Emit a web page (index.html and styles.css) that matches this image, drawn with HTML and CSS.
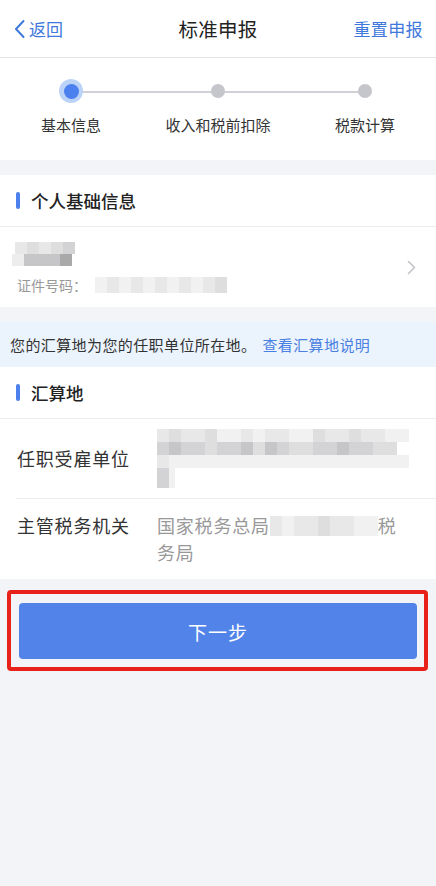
FILE: index.html
```html
<!DOCTYPE html>
<html lang="zh-CN">
<head>
    <meta charset="UTF-8">
    <meta name="viewport" content="width=device-width, initial-scale=1.0">
    <title>标准申报</title>
    <link rel="stylesheet" href="styles.css">
</head>
<body>
    <header class="nav-bar">
        <a class="nav-back" href="#">
            <svg width="13" height="20" viewBox="0 0 13 20"><path d="M10.5 2 L3 10 L10.5 18" fill="none" stroke="#3f78dc" stroke-width="2" stroke-linecap="round" stroke-linejoin="round"/></svg>
            <span>返回</span>
        </a>
        <div class="nav-title">标准申报</div>
        <a class="nav-action" href="#">重置申报</a>
    </header>

    <section class="steps">
        <div class="step active">
            <div class="step-dot"></div>
            <div class="step-label">基本信息</div>
        </div>
        <div class="step">
            <div class="step-dot"></div>
            <div class="step-label">收入和税前扣除</div>
        </div>
        <div class="step">
            <div class="step-dot"></div>
            <div class="step-label">税款计算</div>
        </div>
    </section>

    <section class="card">
        <div class="section-head"><span class="bar"></span>个人基础信息</div>
        <div class="person">
            <div class="person-info">
                <div class="mosaic name-mosaic">
                    <div class="mrow"><span class="c1 w12"></span><span class="c2 w12"></span><span class="c1 w12"></span><span class="c2 w12"></span><span class="c3 w12"></span></div>
                    <div class="mrow"><span class="c3 w12 fade"></span><span class="c4 w12"></span><span class="c4 w12"></span><span class="c4 w12"></span><span class="c5 w12"></span></div>
                </div>
                <div class="id-line">
                    <span>证件号码：</span>
                    <span class="mosaic id-mosaic"><span class="c0 w12"></span><span class="c1 w12"></span><span class="c0 w12"></span><span class="c1 w12"></span><span class="c0 w12"></span><span class="c1 w12"></span><span class="c0 w12"></span><span class="c1 w12"></span><span class="c0 w12"></span><span class="c1 w12"></span><span class="c2 w12"></span></span>
                </div>
            </div>
            <svg class="chevron" width="9" height="15" viewBox="0 0 9 15"><path d="M1.5 1.5 L7.5 7.5 L1.5 13.5" fill="none" stroke="#c4c4c8" stroke-width="1.6" stroke-linecap="round" stroke-linejoin="round"/></svg>
        </div>
    </section>

    <div class="notice">您的汇算地为您的任职单位所在地。<a href="#">查看汇算地说明</a></div>

    <section class="card">
        <div class="section-head bordered"><span class="bar"></span>汇算地</div>
        <div class="fields">
            <div class="field">
                <div class="field-label">任职受雇单位</div>
                <div class="mosaic unit-mosaic">
                    <div class="mrow"><span class="c1 w12"></span><span class="c2 w12"></span><span class="c1 w24"></span><span class="c2 w12"></span><span class="c0 w24"></span><span class="c1 w12"></span><span class="c0 w12"></span><span class="c1 w24"></span><span class="c0 w24"></span><span class="c2 w12"></span><span class="c1 w24"></span><span class="c2 w12"></span><span class="c1 w24"></span><span class="c0 w24"></span></div>
                    <div class="mrow"><span class="c3 w12"></span><span class="c4 w12"></span><span class="c3 w24"></span><span class="c2 w12"></span><span class="c3 w24"></span><span class="c4 w12"></span><span class="c2 w12"></span><span class="c4 w12"></span><span class="c3 w12"></span><span class="c2 w24"></span><span class="c3 w24"></span><span class="c4 w12"></span><span class="c3 w24"></span><span class="c2 w24"></span></div>
                    <div class="mrow"><span class="c1 w12"></span><span class="c0 w24"></span><span class="c0 w24"></span><span class="c0 w24"></span><span class="c0 w24"></span><span class="c0 w24"></span><span class="c0 w24"></span><span class="c0 w24"></span><span class="c0 w24"></span><span class="c0 w24"></span><span class="c0 w24"></span></div>
                    <div class="mrow tall"><span class="c3 w12"></span><span class="c0 w6"></span></div>
                </div>
            </div>
            <div class="field top">
                <div class="field-label">主管税务机关</div>
                <div class="field-value">国家税务总局<span class="mosaic inline-mosaic"><span class="c1 w12"></span><span class="c0 w12"></span><span class="c1 w24"></span><span class="c2 w12"></span><span class="c1 w24"></span><span class="c0 w24"></span></span><span>税</span><span>务局</span></div>
            </div>
        </div>
    </section>

    <div class="action-area">
        <div class="highlight">
            <button class="btn-next">下一步</button>
        </div>
    </div>
</body>
</html>
```

FILE: styles.css
```css
* {
    margin: 0;
    padding: 0;
    box-sizing: border-box;
}

body {
    font-family: "Noto Sans CJK SC", "Noto Sans", sans-serif;
    background: #f3f4f8;
    color: #333;
    min-height: 100vh;
}

a {
    text-decoration: none;
}

.nav-bar {
    height: 58px;
    background: white;
    border-bottom: 1px solid #e4e4e6;
    display: grid;
    grid-template-columns: 1fr auto 1fr;
    align-items: center;
    padding: 0 13px 0 13px;
}

.nav-back {
    display: flex;
    align-items: center;
    color: #3f78dc;
    font-size: 17px;
    gap: 3px;
}

.nav-title {
    font-size: 19.5px;
    color: #222;
    letter-spacing: 0.3px;
}

.nav-action {
    justify-self: end;
    color: #3f78dc;
    font-size: 17px;
    letter-spacing: 0.4px;
}

.steps {
    background: white;
    height: 102px;
    display: grid;
    grid-template-columns: repeat(3, 147px);
    justify-content: center;
    padding-top: 21px;
}

.step {
    position: relative;
    display: flex;
    flex-direction: column;
    align-items: center;
}

.step:not(:last-child)::after {
    content: "";
    position: absolute;
    top: 12px;
    left: 50%;
    width: 100%;
    height: 2px;
    background: #d0d1d5;
}

.step-dot {
    width: 24px;
    height: 24px;
    display: flex;
    align-items: center;
    justify-content: center;
    position: relative;
    z-index: 1;
}

.step-dot::before {
    content: "";
    width: 14px;
    height: 14px;
    border-radius: 50%;
    background: #c5c6cb;
}

.step.active .step-dot {
    background: #bcd3f8;
    border-radius: 50%;
}

.step.active .step-dot::before {
    width: 15px;
    height: 15px;
    background: #4b80ee;
}

.step-label {
    margin-top: 11px;
    font-size: 15px;
    color: #333;
    white-space: nowrap;
}

.card {
    background: white;
    margin-top: 15px;
}

.section-head {
    height: 52px;
    display: flex;
    align-items: center;
    padding-left: 16px;
    font-size: 17.5px;
    font-weight: 500;
    color: #222;
    border-bottom: 1px solid #ececee;
}

.section-head .bar {
    width: 4px;
    height: 17px;
    border-radius: 2px;
    background: #4b80ee;
    margin-right: 11px;
}

.person {
    height: 80px;
    display: flex;
    align-items: center;
    justify-content: space-between;
    padding: 0 20px 0 12px;
}

.person-info {
    display: flex;
    flex-direction: column;
    gap: 9px;
    padding-top: 2px;
}

.mosaic {
    display: flex;
    flex-direction: column;
}

.mrow {
    display: flex;
    height: 13px;
}

.name-mosaic .mrow {
    height: 12px;
}

.mrow.tall {
    height: 20px;
}

.mosaic span {
    display: block;
    height: 100%;
}

.w6 { width: 6px; }
.w12 { width: 12px; }
.w24 { width: 24px; }

.c0 { background: #f1f1f2; }
.c1 { background: #e8e8e9; }
.c2 { background: #dededf; }
.c3 { background: #d3d3d5; }
.c4 { background: #c6c6c8; }
.c5 { background: #a9a9a9; }
.fade { opacity: 0.4; }

.name-mosaic .mrow:first-child {
    margin-left: 3px;
}

.id-line {
    display: flex;
    align-items: center;
    font-size: 14px;
    color: #999;
    padding-left: 5px;
}

.id-mosaic {
    flex-direction: row;
    height: 16px;
    margin-left: 8px;
}

.notice {
    margin-top: 15px;
    height: 45px;
    background: #ebf3fd;
    display: flex;
    align-items: center;
    padding-left: 10px;
    font-size: 15px;
    letter-spacing: 0.4px;
    color: #333;
}

.notice a {
    color: #4a80e2;
    margin-left: 6px;
}

.card + .notice + .card {
    margin-top: 0;
}

.fields {
    padding-left: 16px;
}

.field {
    display: flex;
    align-items: center;
    padding: 10px 0;
    min-height: 80px;
    border-bottom: 1px solid #ececee;
}

.field:last-child {
    border-bottom: none;
}

.field.top {
    align-items: flex-start;
    padding: 13px 0;
}

.field-label {
    width: 141px;
    flex-shrink: 0;
    padding-left: 1px;
    font-size: 18px;
    letter-spacing: 0.8px;
    line-height: 27px;
    color: #333;
}

.unit-mosaic {
    height: 59px;
}

.field-value {
    flex: 1;
    padding-right: 32px;
    font-size: 18px;
    letter-spacing: 0.8px;
    line-height: 27px;
    color: #999;
}

.inline-mosaic {
    display: inline-flex;
    flex-direction: row;
    vertical-align: top;
    height: 20px;
    margin-top: 4px;
}

.action-area {
    padding: 11px 8px 0 7px;
}

.highlight {
    border: 4px solid #e8221b;
    border-radius: 4px;
    padding: 9px 7px 8px 8px;
}

.btn-next {
    width: 100%;
    height: 56px;
    border: none;
    border-radius: 4px;
    background: #5183e9;
    color: white;
    font-family: inherit;
    font-size: 19px;
    letter-spacing: 1px;
    cursor: pointer;
}
```
